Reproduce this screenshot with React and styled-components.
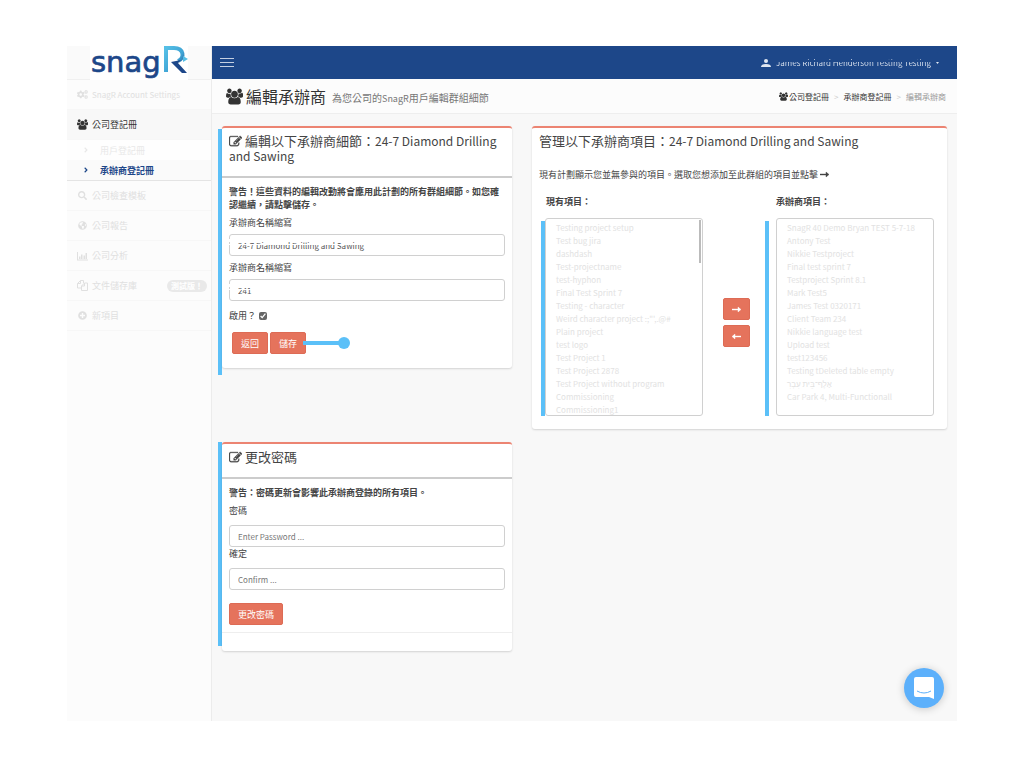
import React from 'react'
import styled, { createGlobalStyle, css } from 'styled-components'
import {
  FaCogs,
  FaSearch,
  FaGlobeAmericas,
  FaPlusCircle,
  FaAngleRight,
} from 'react-icons/fa'

const GlobalStyle = createGlobalStyle`
  * {
    box-sizing: border-box;
  }
  body {
    margin: 0;
    background: #fff;
    color: #444;
    font-family: "Noto Sans CJK TC", "Noto Sans", sans-serif;
    font-size: 9px;
    line-height: 13px;
  }
  button, input, select {
    font: inherit;
  }
`
const Page = styled.div`
  padding: 46px 67px;
`
const Shell = styled.div`
  display: grid;
  grid-template-columns: 145px 1fr;
  background: #f8f8f8;
`
const Sidebar = styled.aside`
  background: #fcfcfc;
  border-right: 1px solid #ececec;
`
const LogoLink = styled.a`
  display: flex;
  justify-content: center;
  height: 34px;
  background: #fafafa;
  border-bottom: 1px solid #f0f0f0;
`
const NavItem = styled.a`
  display: flex;
  align-items: center;
  gap: 4px;
  height: 30px;
  padding: 0 4px 0 10px;
  border-bottom: 1px solid #f7f7f7;
  color: ${({ $active }) => ($active ? '#333' : '#e0e0e0')};
  background: ${({ $active }) => ($active ? '#f8f8f8' : 'transparent')};
  text-decoration: none;
  svg {
    width: 11px;
  }
`
const Latin = styled.span`
  font-size: ${({ $size }) => $size || 8}px;
`
const SubNav = styled.div`
  border-bottom: 1px solid #e4e4e4;
`
const SubItem = styled.a`
  display: flex;
  align-items: center;
  gap: 10px;
  height: 20px;
  padding-left: 15px;
  color: ${({ $active }) => ($active ? '#1d4789' : '#e8e8e8')};
  background: ${({ $active }) => ($active ? '#fafafa' : '#fefefe')};
  font-weight: ${({ $active }) => ($active ? 700 : 400)};
  text-decoration: none;
`
const Badge = styled.span`
  margin-left: auto;
  padding: 0 4px;
  border-radius: 6px;
  background: #e9e9e9;
  color: #fff;
  font-size: 8px;
  font-weight: 700;
  line-height: 12px;
`
const Main = styled.div`
  min-width: 0;
  padding-bottom: 70px;
`
const TopBar = styled.header`
  display: flex;
  align-items: center;
  justify-content: space-between;
  height: 33px;
  padding: 0 18px 0 8px;
  background: #1d4789;
`
const MenuButton = styled.button`
  display: flex;
  padding: 0;
  border: 0;
  background: none;
`
const UserLink = styled.a`
  display: flex;
  align-items: center;
  gap: 5px;
  color: #dfe6f1;
  text-decoration: none;
`
const UserName = styled.span`
  background: linear-gradient(transparent 3px, #dfe6f1 3px, #dfe6f1 4px, transparent 4px, transparent 6px, #dfe6f1 6px);
  background-clip: text;
  color: transparent;
`
const TitleBar = styled.div`
  display: flex;
  align-items: center;
  justify-content: space-between;
  height: 35px;
  padding: 0 11px 0 14px;
  background: #fcfcfc;
  border-bottom: 1px solid #eee;
`
const PageTitle = styled.h1`
  display: flex;
  align-items: center;
  gap: 3px;
  margin: 0;
  color: #333;
  font-size: 16px;
  font-weight: 400;
  line-height: 24px;
  small {
    margin: 4px 0 0 3px;
    color: #777;
    font-size: 10px;
    line-height: 14px;
  }
`
const Breadcrumb = styled.nav`
  display: flex;
  align-items: center;
  gap: 5px;
  font-size: 8px;
  color: #999;
  a {
    display: flex;
    align-items: center;
    gap: 1px;
    color: #333;
    text-decoration: none;
  }
  i {
    color: #ccc;
    font-style: normal;
  }
`
const Content = styled.div`
  display: grid;
  grid-template-columns: 294px 1fr;
  gap: 20px;
  align-items: start;
  padding: 12px 10px 0 6px;
`
const Column = styled.div`
  display: flex;
  flex-direction: column;
  gap: 74px;
`
const Marked = styled.div`
  display: flex;
  gap: ${({ $gap }) => $gap || 0}px;
  &::before {
    content: "";
    flex: 0 0 4px;
    margin: ${({ $bar }) => $bar};
    background: #5bc0f8;
  }
`
const Card = styled.section`
  flex: 1;
  min-width: 0;
  border-top: 2px solid #ec8472;
  border-radius: 3px;
  background: #fff;
  box-shadow: 0 1px 2px rgba(0, 0, 0, 0.15);
`
const CardTitle = styled.h2`
  margin: 0;
  padding: 5px 7px 13px;
  border-bottom: ${({ $plain }) => ($plain ? '0' : '2px solid #ccc')};
  font-size: 13px;
  font-weight: 400;
  line-height: 15px;
  svg {
    margin-right: 3px;
    vertical-align: -2px;
  }
`
const CardBody = styled.div`
  padding: 7px 7px ${({ $bottom }) => $bottom || 14}px;
`
const Warning = styled.p`
  margin: 0 0 5px;
  font-weight: 700;
`
const Label = styled.label`
  display: block;
`
const field = css`
  width: 100%;
  border: 1px solid #d0d0d0;
  border-radius: 3px;
  background: #fff;
  color: #555;
  font-size: 8px;
`
const Input = styled.input`
  ${field}
  display: block;
  height: 22px;
  margin: ${({ $tight }) => ($tight ? '8px 0 0' : '5px 0')};
  padding: 0 8px;
  &::placeholder {
    color: #777;
  }
`
const Masked = styled.div`
  position: relative;
  &::before {
    content: "";
    position: absolute;
    left: 0;
    top: 5px;
    width: 80%;
    height: 6px;
    background: linear-gradient(#fff 3px, transparent 3px, transparent 5px, #fff 5px);
  }
`
const CheckRow = styled.div`
  display: flex;
  align-items: center;
  gap: 3px;
  padding-top: 3px;
  input {
    width: 8px;
    height: 8px;
    margin: 0;
    accent-color: #666;
  }
`
const Actions = styled.div`
  display: flex;
  align-items: center;
  gap: 2px;
  padding: ${({ $flush }) => ($flush ? '13px 0 0' : '10px 3px 0')};
`
const Button = styled.button`
  display: flex;
  align-items: center;
  height: 22px;
  padding: 0 8px;
  border: 1px solid #dd6b55;
  border-radius: 2px;
  background: #e5735c;
  color: #fff;
`
const Pointer = styled.svg`
  margin-left: -5px;
  z-index: 1;
`
const CardFoot = styled.div`
  height: 19px;
  border-top: 1px solid #eee;
`
const Transfer = styled.div`
  display: grid;
  grid-template-columns: 162px 1fr 169px;
  padding: 0 13px 13px 9px;
`
const ListTitle = styled.label`
  display: block;
  margin-bottom: 10px;
  padding-left: ${({ $indent }) => $indent}px;
  font-weight: 700;
`
const ListWrap = styled.div`
  position: relative;
  flex: 1;
`
const List = styled.select`
  ${field}
  display: block;
  height: 198px;
  padding: 2px 0;
  overflow: hidden;
  scrollbar-width: none;
  option {
    min-height: 0;
    padding: 1px 10px;
    color: #e2e2e2;
  }
`
const Thumb = styled.span`
  position: absolute;
  top: 2px;
  right: 2px;
  width: 2px;
  height: 43px;
  background: #bbb;
`
const MoveButtons = styled.div`
  display: flex;
  flex-direction: column;
  align-items: center;
  gap: 5px;
  padding: 103px 0 0 4px;
`
const Chat = styled.button`
  position: fixed;
  right: 80px;
  bottom: 60px;
  width: 40px;
  height: 40px;
  padding: 0;
  border: 0;
  border-radius: 50%;
  background: #5cb0fb;
  box-shadow: 0 1px 8px rgba(0, 0, 0, 0.2);
  svg {
    display: block;
    margin: auto;
  }
`

const available = ['Testing project setup', 'Test bug jira', 'dashdash', 'Test-projectname', 'test-hyphon', 'Final Test Sprint 7', 'Testing - character', 'Weird character project :;"\',.@#', 'Plain project', 'test logo', 'Test Project 1', 'Test Project 2878', 'Test Project without program', 'Commissioning', 'Commissioning1', 'Commissioning1']
const assigned = ['SnagR 40 Demo Bryan TEST 5-7-18', 'Antony Test', 'Nikkie Testproject', 'Final test sprint 7', 'Testproject Sprint 8.1', 'Mark Test5', 'James Test 0320171', 'Client Team 234', 'Nikkie language test', 'Upload test', 'test123456', 'Testing tDeleted table empty', 'אָלֶף־בֵּית עִבְרִ', 'Car Park 4, Multi-Functionall']

const EditIcon = () => (
  <svg width="13" height="13" viewBox="0 0 1792 1792" fill="currentColor" aria-hidden="true">
    <path d="M888 1184l116-116-152-152-116 116v56h96v96h56zm440-720q-16-16-33 1l-350 350q-17 17-1 33t33-1l350-350q17-17 1-33zm80 594v190q0 119-84.500 203.500t-203.500 84.500h-832q-119 0-203.500-84.500t-84.500-203.500v-832q0-119 84.500-203.500t203.500-84.500h832q63 0 117 25 15 7 18 23 3 17-9 29l-49 49q-14 14-32 8-23-6-45-6h-832q-66 0-113 47t-47 113v832q0 66 47 113t113 47h832q66 0 113-47t47-113v-126q0-13 9-22l64-64q15-15 35-7t20 29zm-96-738l288 288-672 672h-288v-288zm444 132l-92 92-288-288 92-92q28-28 68-28t68 28l152 152q28 28 28 68t-28 68z" stroke="currentColor" strokeWidth="40" />
  </svg>
)

const UsersIcon = ({ size = 11 }) => (
  <svg width={size} height={size} viewBox="0 0 1920 1792" fill="currentColor" aria-hidden="true">
    <path d="M593 896q-162 5-265 128h-134q-82 0-138-40.500t-56-118.500q0-353 124-353 6 0 43.500 21t97.500 42.500 119 21.500q67 0 133-23-5 37-5 66 0 159 93 290zm1071 637q0 120-73 189.500t-194 69.500h-874q-121 0-194-69.500t-73-189.500q0-53 3.500-103.500t14-109 26.500-108.500 43-97.500 62-81 85.500-53.500 111.500-20q10 0 43 21.500t73 48 107 48 135 21.500 135-21.500 107-48 73-48 43-21.500q61 0 111.500 20t85.500 53.500 62 81 43 97.500 26.500 108.500 14 109 3.500 103.500zm-1024-1277q0 106-75 181t-181 75-181-75-75-181 75-181 181-75 181 75 75 181zm704 384q0 159-112.500 271.500t-271.500 112.500-271.500-112.500-112.500-271.500 112.500-271.500 271.500-112.500 271.500 112.500 112.500 271.500zm576 225q0 78-56 118.500t-138 40.500h-134q-103-123-265-128 93-131 93-290 0-29-5-66 66 23 133 23 59 0 119-21.500t97.500-42.500 43.500-21q124 0 124 353zm-128-609q0 106-75 181t-181 75-181-75-75-181 75-181 181-75 181 75 75 181z" />
  </svg>
)

const ChartIcon = () => (
  <svg width="11" height="10" viewBox="0 0 22 18" fill="currentColor" aria-hidden="true">
    <path d="M0 1h2v15h20v2H0zM4 10h3v5H4zM8 6h3v9H8zM13 8h3v7h-3zM17 3h3v12h-3z" />
  </svg>
)

const FilesIcon = () => (
  <svg width="11" height="11" viewBox="0 0 22 22" fill="none" stroke="currentColor" strokeWidth="2" aria-hidden="true">
    <path d="M8 16H1V7l6-6h6v5M7 1v6H1M9 12l6-6h6v15H9zM15 6v6H9" />
  </svg>
)

const Arrow = ({ left }) => (
  <svg width="9" height="7" viewBox="0 0 9 7" fill="currentColor" aria-hidden="true">
    <path d={left ? 'M9 3v1H3v2L0 3.500 3 1v2z' : 'M0 3v1h6v2l3-2.500L6 1v2z'} stroke="currentColor" strokeWidth=".4" />
  </svg>
)

const Logo = () => (
  <svg width="98" height="34" viewBox="0 0 98 34">
    <defs>
      <linearGradient id="bowl" x1="0" y1="0" x2="1" y2="1">
        <stop offset="0" stopColor="#55bfe6" />
        <stop offset=".6" stopColor="#3fa3d4" />
        <stop offset="1" stopColor="#1d4789" />
      </linearGradient>
    </defs>
    <rect width="98" height="34" fill="#fff" />
    <text x="1" y="26" fill="#1d4789" stroke="#1d4789" strokeWidth=".7" fontFamily="DejaVu Sans" fontSize="29">snag</text>
    <path d="M76 26V2h8c10 0 11 10 4 13" fill="none" stroke="url(#bowl)" strokeWidth="4" />
    <path d="M91 14l-10 2 11 11h5l-9-10z" fill="#1d4789" />
    <path d="M93 10l5 3-5 3z" fill="#55bfe6" />
  </svg>
)

const App = () => (
  <Page>
    <GlobalStyle />
    <Shell>
      <Sidebar>
        <LogoLink href="#" aria-label="snagR"><Logo /></LogoLink>
        <NavItem href="#"><FaCogs /><Latin>SnagR Account Settings</Latin></NavItem>
        <NavItem href="#" $active><UsersIcon />公司登記冊</NavItem>
        <SubNav>
          <SubItem href="#"><FaAngleRight size={8} />用戶登記冊</SubItem>
          <SubItem href="#" $active><FaAngleRight size={8} />承辦商登記冊</SubItem>
        </SubNav>
        <NavItem href="#"><FaSearch />公司檢查模板</NavItem>
        <NavItem href="#"><FaGlobeAmericas />公司報告</NavItem>
        <NavItem href="#"><ChartIcon />公司分析</NavItem>
        <NavItem href="#"><FilesIcon />文件儲存庫<Badge>測試版！</Badge></NavItem>
        <NavItem href="#"><FaPlusCircle />新項目</NavItem>
      </Sidebar>
      <Main>
        <TopBar>
          <MenuButton aria-label="Menu">
            <svg width="14" height="9" viewBox="0 0 14 9" fill="#c5d0e2"><path d="M0 0h14v1H0zM0 4h14v1H0zM0 8h14v1H0z" /></svg>
          </MenuButton>
          <UserLink href="#">
            <svg width="10" height="10" viewBox="0 0 10 10" fill="currentColor"><circle cx="5" cy="3" r="2" /><path d="M0 9q0-3 5-3t5 3z" /></svg>
            <UserName><Latin>James Richard Henderson Testing Testing</Latin></UserName>
            <svg width="3" height="3" viewBox="0 0 3 3" fill="currentColor"><path d="M0 1h3L1.500 3z" /></svg>
          </UserLink>
        </TopBar>
        <TitleBar>
          <PageTitle><UsersIcon size={17} />編輯承辦商<small>為您公司的<Latin $size={9}>SnagR</Latin>用戶編輯群組細節</small></PageTitle>
          <Breadcrumb>
            <a href="#"><UsersIcon size={9} />公司登記冊</a><i>&gt;</i><a href="#">承辦商登記冊</a><i>&gt;</i><span>編輯承辦商</span>
          </Breadcrumb>
        </TitleBar>
        <Content>
          <Column>
            <Marked $bar="3px 0 -7px">
              <Card>
                <CardTitle><EditIcon />編輯以下承辦商細節：<Latin $size={12}>24-7 Diamond Drilling and Sawing</Latin></CardTitle>
                <CardBody>
                  <Warning>警告！這些資料的編輯改動將會應用此計劃的所有群組細節。如您確認繼續，請點擊儲存。</Warning>
                  <Label htmlFor="name">承辦商名稱縮寫</Label>
                  <Masked><Input id="name" defaultValue="24-7 Diamond Drilling and Sawing" /></Masked>
                  <Label htmlFor="short">承辦商名稱縮寫</Label>
                  <Masked><Input id="short" defaultValue="241" /></Masked>
                  <CheckRow><label htmlFor="enabled">啟用？</label><input id="enabled" type="checkbox" defaultChecked /></CheckRow>
                  <Actions>
                    <Button>返回</Button>
                    <Button>儲存</Button>
                    <Pointer width="50" height="12" viewBox="0 0 50 12" fill="#5bc0f8"><path d="M0 4h40v4H0z" /><circle cx="41" cy="6" r="6" /></Pointer>
                  </Actions>
                </CardBody>
              </Card>
            </Marked>
            <Marked $bar="0 0 5px">
              <Card>
                <CardTitle><EditIcon />更改密碼</CardTitle>
                <CardBody $bottom={7}>
                  <Warning>警告：密碼更新會影響此承辦商登錄的所有項目。</Warning>
                  <Label htmlFor="password">密碼</Label>
                  <Input id="password" type="password" placeholder="Enter Password ..." $tight />
                  <Label htmlFor="confirm">確定</Label>
                  <Input id="confirm" type="password" placeholder="Confirm ..." $tight />
                  <Actions $flush><Button>更改密碼</Button></Actions>
                </CardBody>
                <CardFoot />
              </Card>
            </Marked>
          </Column>
          <Card>
            <CardTitle $plain>管理以下承辦商項目：<Latin $size={12}>24-7 Diamond Drilling and Sawing</Latin></CardTitle>
            <CardBody>現有計劃顯示您並無參與的項目。選取您想添加至此群組的項目並點擊 <Arrow /></CardBody>
            <Transfer>
              <div>
                <ListTitle htmlFor="available" $indent={5}>現有項目：</ListTitle>
                <Marked $bar="3px 0 0">
                  <ListWrap>
                    <List id="available" multiple>{available.map((p, i) => <option key={i}>{p}</option>)}</List>
                    <Thumb />
                  </ListWrap>
                </Marked>
              </div>
              <MoveButtons>
                <Button aria-label="Add"><Arrow /></Button>
                <Button aria-label="Remove"><Arrow left /></Button>
              </MoveButtons>
              <div>
                <ListTitle htmlFor="assigned" $indent={11}>承辦商項目：</ListTitle>
                <Marked $bar="3px 0 0" $gap={7}>
                  <ListWrap>
                    <List id="assigned" multiple>{assigned.map(p => <option key={p}>{p}</option>)}</List>
                  </ListWrap>
                </Marked>
              </div>
            </Transfer>
          </Card>
        </Content>
      </Main>
    </Shell>
    <Chat aria-label="Chat">
      <svg width="20" height="22" viewBox="0 0 20 22"><path d="M2 0h16a2 2 0 0 1 2 2v20l-5-2H2a2 2 0 0 1-2-2V2a2 2 0 0 1 2-2z" fill="#fff" /><path d="M3 14q7 4 14 0" fill="none" stroke="#5cb0fb" /></svg>
    </Chat>
  </Page>
)

export default App
